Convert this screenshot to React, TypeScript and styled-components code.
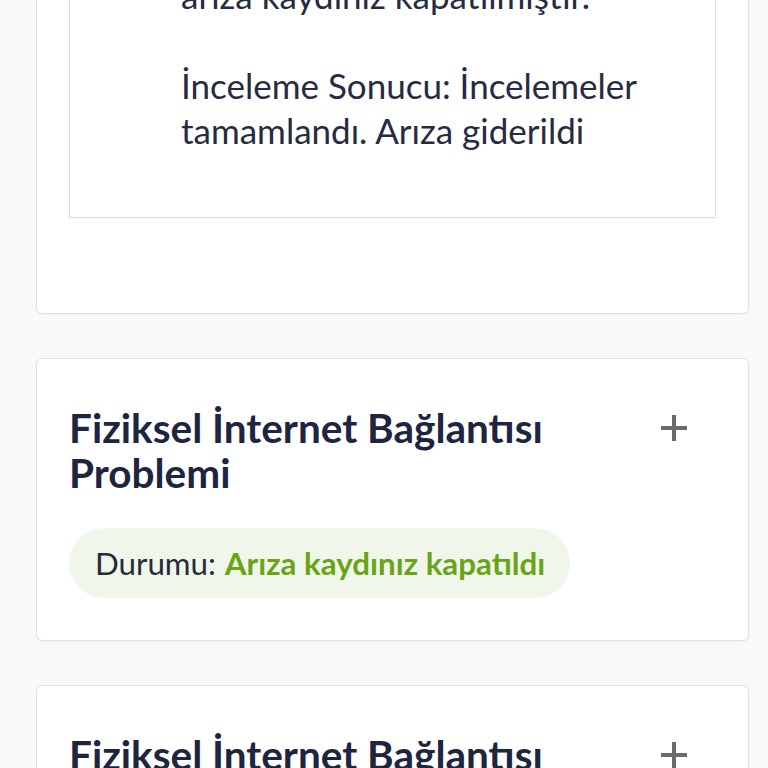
import React from "react";
import styled, { createGlobalStyle } from "styled-components";

const Global = createGlobalStyle`
  html, body { margin: 0; padding: 0; background: #f8f9fb; }
  body { font-family: Lato, "Noto Sans", sans-serif; color: #1f2740; overflow: hidden; }
`;

const Page = styled.div`
  display: flex;
  flex-direction: column;
  gap: 44px;
  padding: 0 19px 40px 36px;
  margin-top: -146px;
`;

const Card = styled.section<{ $pad?: string }>`
  background: #fff;
  border: 1px solid #dfe1e6;
  border-radius: 6px;
  padding: ${(p) => p.$pad || "46px 32px 42px"};
  box-shadow: 0 1px 2px rgba(0, 0, 0, 0.04);
`;

const DetailBox = styled.div`
  border: 1px solid #dcdee3;
  padding: 40px 32px 64px 111px;
  box-shadow: 0 1px 2px rgba(0, 0, 0, 0.05);
`;

const Para = styled.p`
  margin: 0;
  font-size: 35px;
  line-height: 45px;
  color: #262b42;
  & + & { margin-top: 45px; }
`;

const Header = styled.div`
  display: flex;
  align-items: flex-start;
  justify-content: space-between;
`;

const Title = styled.h3`
  margin: 0;
  font-size: 40.5px;
  line-height: 45px;
  font-weight: 700;
  color: #1d2540;
  max-width: 520px;
`;

const PlusButton = styled.button`
  border: 0;
  background: none;
  padding: 0;
  margin: 9px 28px 0 0;
  width: 28px;
  height: 28px;
  display: flex;
`;

const Badge = styled.div`
  display: inline-flex;
  align-items: center;
  height: 70px;
  padding: 0 25px 0 26px;
  margin-top: 33px;
  border-radius: 35px;
  background: #f1f6ea;
  font-size: 31.3px;
  color: #262b3a;
`;

const Status = styled.span`
  color: #67a516;
  font-weight: 700;
  margin-left: 9px;
`;

const Plus = () => (
  <svg width="28" height="28" viewBox="0 0 28 28">
    <path d="M14 1v26M1 14h26" stroke="#6b6b6b" strokeWidth="4" />
  </svg>
);

const Item = ({ title }: { title: string }) => (
  <Card>
    <Header>
      <Title>{title}</Title>
      <PlusButton aria-label="Aç">
        <Plus />
      </PlusButton>
    </Header>
    <div>
      <Badge>
        Durumu:<Status>Arıza kaydınız kapatıldı</Status>
      </Badge>
    </div>
  </Card>
);

export default function App() {
  return (
    <>
      <Global />
      <Page>
        <Card $pad="32px 32px 95px">
          <DetailBox>
            <Para>
              Sayın abonemiz,
              <br />
              arıza kaydınız kapatılmıştır.
            </Para>
            <Para>İnceleme Sonucu: İncelemeler tamamlandı. Arıza giderildi</Para>
          </DetailBox>
        </Card>
        <Item title="Fiziksel İnternet Bağlantısı Problemi" />
        <Item title="Fiziksel İnternet Bağlantısı Problemi" />
      </Page>
    </>
  );
}
